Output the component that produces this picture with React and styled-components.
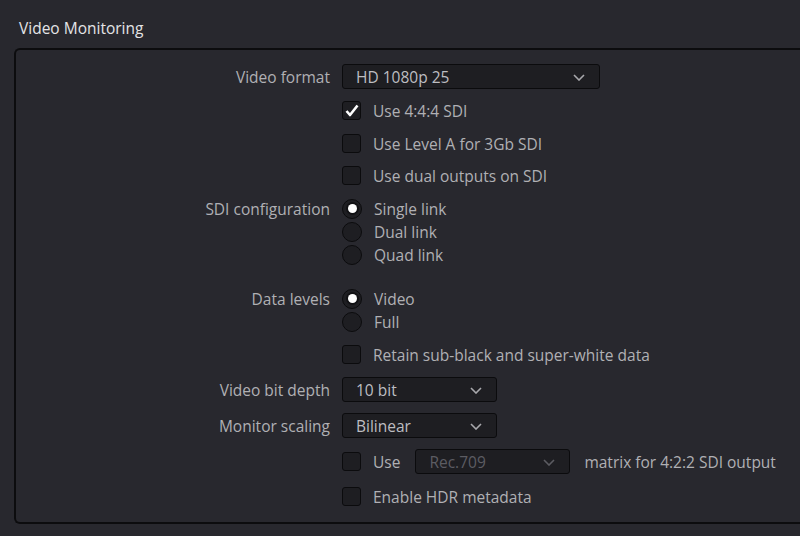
import React from 'react'
import styled, { createGlobalStyle } from 'styled-components'

const Global = createGlobalStyle`
  html, body {
    margin: 0;
    padding: 0;
    background: #28282e;
    overflow: hidden;
  }
  body {
    font-family: "Open Sans", "Noto Sans", sans-serif;
    font-size: 15.5px;
  }
`

const Page = styled.div`
  width: 800px;
  height: 536px;
  background: #28282e;
  overflow: hidden;
`

const Title = styled.div`
  color: #e4e4e6;
  font-size: 15.5px;
  padding: 18px 0 0 19px;
  height: 31px;
  line-height: 20px;
  box-sizing: border-box;
`

const Panel = styled.div`
  margin: 17px 0 0 14px;
  width: 820px;
  border: 2px solid #0c0c0e;
  border-right: none;
  border-radius: 6px 0 0 6px;
  padding: 14px 0 14px 0;
  display: flex;
  flex-direction: column;
`

const Row = styled.div`
  display: grid;
  grid-template-columns: 314px auto;
  column-gap: 12px;
  align-items: ${({ $top }) => ($top ? 'start' : 'center')};
  margin-top: ${({ $gap }) => $gap || 0}px;
`

const Label = styled.div`
  text-align: right;
  color: #b0b0b4;
  line-height: ${({ $lh }) => $lh || 24}px;
  padding-top: 1px;
  white-space: nowrap;
`

const Controls = styled.div`
  display: flex;
  flex-direction: ${({ $col }) => ($col ? 'column' : 'row')};
  align-items: ${({ $col }) => ($col ? 'flex-start' : 'center')};
`

const Select = styled.div`
  width: ${({ $w }) => $w}px;
  height: 25px;
  box-sizing: border-box;
  background: #1e1e22;
  border: 1px solid #0b0b0d;
  border-radius: 3px;
  display: flex;
  align-items: center;
  justify-content: space-between;
  padding: 1px 14px 0 13px;
  color: ${({ $disabled }) => ($disabled ? '#5c5c62' : '#bdbdc1')};
  margin: ${({ $m }) => $m || '0'};
`

const CheckRow = styled.label`
  display: flex;
  align-items: center;
  height: 24px;
  color: #b0b0b4;
  white-space: nowrap;
`

const Box = styled.span`
  width: 19px;
  height: 19px;
  box-sizing: border-box;
  background: #1e1e22;
  border: 1px solid #0b0b0d;
  border-radius: 3px;
  display: flex;
  align-items: center;
  justify-content: center;
  margin-right: 12px;
  flex-shrink: 0;
`

const Caption = styled.span`
  padding-top: 1px;
`

const RadioRow = styled.label`
  display: flex;
  align-items: center;
  height: 23px;
  color: #b0b0b4;
`

const Circle = styled.span`
  width: 20px;
  height: 20px;
  box-sizing: border-box;
  border-radius: 50%;
  background: #1e1e22;
  border: 1.5px solid #0b0b0d;
  display: flex;
  align-items: center;
  justify-content: center;
  margin-right: 12px;
  flex-shrink: 0;
`

const Dot = styled.span`
  width: 9px;
  height: 9px;
  border-radius: 50%;
  background: #ffffff;
  box-shadow: 0 0 0 2px #111114;
`

const Text = styled.span`
  color: #b0b0b4;
  white-space: nowrap;
  padding-top: 1px;
`

const Chevron = ({ dim }) => (
  <svg width="12" height="7" viewBox="0 0 12 7">
    <path d="M1 1 L6 6 L11 1" fill="none" stroke={dim ? '#5c5c62' : '#a8a8ac'} strokeWidth="1.6" />
  </svg>
)

const Tick = () => (
  <svg width="14" height="13" viewBox="0 0 14 13">
    <path d="M1.5 7 L5 11 L12.5 1.5" fill="none" stroke="#ffffff" strokeWidth="2.6" strokeLinejoin="round" />
  </svg>
)

const Dropdown = ({ w, value, disabled, m }) => (
  <Select $w={w} $disabled={disabled} $m={m}>
    <span>{value}</span>
    <Chevron dim={disabled} />
  </Select>
)

const Check = ({ checked, children }) => (
  <CheckRow>
    <Box>{checked && <Tick />}</Box>
    <Caption>{children}</Caption>
  </CheckRow>
)

const Radio = ({ checked, children }) => (
  <RadioRow>
    <Circle>{checked && <Dot />}</Circle>
    <Caption>{children}</Caption>
  </RadioRow>
)

export default function App() {
  return (
    <Page>
      <Global />
      <Title>Video Monitoring</Title>
      <Panel>
        <Row>
          <Label>Video format</Label>
          <Controls>
            <Dropdown w={258} value="HD 1080p 25" />
          </Controls>
        </Row>
        <Row $gap={9}>
          <Label />
          <Check checked>Use 4:4:4 SDI</Check>
        </Row>
        <Row $gap={9}>
          <Label />
          <Check>Use Level A for 3Gb SDI</Check>
        </Row>
        <Row $gap={8}>
          <Label />
          <Check>Use dual outputs on SDI</Check>
        </Row>
        <Row $gap={10} $top>
          <Label $lh={23}>SDI configuration</Label>
          <Controls $col>
            <Radio checked>Single link</Radio>
            <Radio>Dual link</Radio>
            <Radio>Quad link</Radio>
          </Controls>
        </Row>
        <Row $gap={21} $top>
          <Label $lh={23}>Data levels</Label>
          <Controls $col>
            <Radio checked>Video</Radio>
            <Radio>Full</Radio>
          </Controls>
        </Row>
        <Row $gap={9}>
          <Label />
          <Check>Retain sub-black and super-white data</Check>
        </Row>
        <Row $gap={11}>
          <Label>Video bit depth</Label>
          <Controls>
            <Dropdown w={155} value="10 bit" />
          </Controls>
        </Row>
        <Row $gap={11}>
          <Label>Monitor scaling</Label>
          <Controls>
            <Dropdown w={155} value="Bilinear" />
          </Controls>
        </Row>
        <Row $gap={11}>
          <Label />
          <Controls>
            <Check>Use</Check>
            <Dropdown w={155} value="Rec.709" disabled m="0 14px 0 15px" />
            <Text>matrix for 4:2:2 SDI output</Text>
          </Controls>
        </Row>
        <Row $gap={10}>
          <Label />
          <Check>Enable HDR metadata</Check>
        </Row>
      </Panel>
    </Page>
  )
}
